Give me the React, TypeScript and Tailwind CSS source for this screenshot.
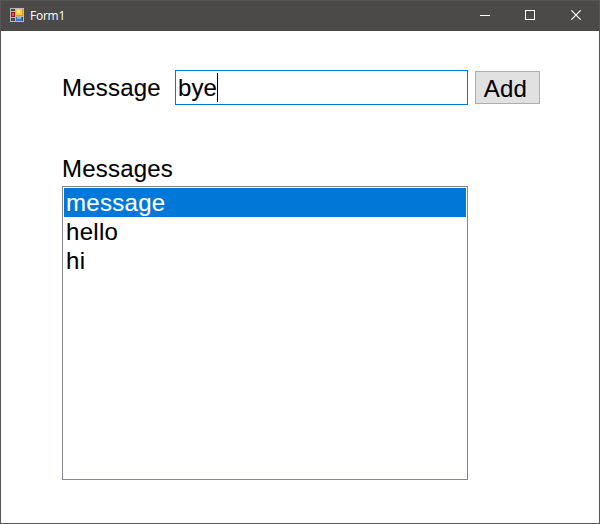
import { useState } from "react";

function AppIcon() {
  return (
    <svg className="mb-[2px]" width="14" height="14" viewBox="0 0 14 14" shapeRendering="crispEdges">
      <rect width="14" height="14" fill="#b9b9b9" />
      <rect x="1" y="1" width="4" height="2" fill="#4c4a48" />
      <rect x="1" y="10" width="4" height="3" fill="#4c4a48" />
      <rect x="12" y="9" width="1" height="4" fill="#4c4a48" />
      <rect x="1" y="4" width="4" height="5" fill="#a81712" />
      <rect x="2" y="5" width="2" height="3" fill="#e8503f" />
      <rect x="6" y="1" width="7" height="7" fill="#dc9a14" />
      <rect x="6" y="1" width="6" height="6" fill="#f8cb42" />
      <rect x="7" y="2" width="3" height="3" fill="#ffec98" />
      <rect x="6" y="9" width="6" height="4" fill="#3972d4" />
      <rect x="7" y="9" width="4" height="2" fill="#82b4f5" />
    </svg>
  );
}

function TitleBar() {
  return (
    <header className="flex h-[30px] items-center bg-[#4c4a48] pl-[9px] text-white">
      <AppIcon />
      <span className="ml-[6px] font-['Open_Sans',sans-serif] text-[12px] leading-[16px] tracking-[-0.25px]">Form1</span>
      <div className="ml-auto mr-px flex h-full" aria-label="Window controls">
        <span className="flex w-[45px] items-center justify-center">
          <svg width="10" height="10" shapeRendering="crispEdges">
            <path d="M0 4.5h10" stroke="white" />
          </svg>
        </span>
        <span className="flex w-[46px] items-center justify-center pb-[2px]">
          <svg width="10" height="10" shapeRendering="crispEdges">
            <path d="M.5 .5h9v9h-9z" stroke="white" fill="none" />
          </svg>
        </span>
        <span className="flex w-[45px] items-center justify-center pb-[2px]">
          <svg width="10" height="10">
            <path d="M.3 .3l9.4 9.4M9.7 .3l-9.4 9.4" stroke="white" strokeWidth="1.2" />
          </svg>
        </span>
      </div>
    </header>
  );
}

export default function App() {
  const [items] = useState(["message", "hello", "hi"]);
  return (
    <div className="flex h-[524px] w-[600px] flex-col border border-[#565656] bg-white font-['Liberation_Sans',Arial,sans-serif] text-[24px] leading-[29px] text-black">
      <TitleBar />
      <main className="pl-[61px] pt-[39px] [-webkit-text-stroke:0.1px]">
        <div className="flex items-start">
          <span className="w-[113px] shrink-0 pt-[3px] tracking-[0.2px]">Message</span>
          <div className="flex h-[35px] w-[293px] shrink-0 items-start border border-[#0078d7] pl-[2px] pt-[2px]">
            <span className="tracking-[0.1px]">bye</span>
            <span className="h-[29px] w-px bg-black" />
          </div>
          <button className="ml-[7px] mt-px h-[33px] w-[65px] shrink-0 border border-[#adadad] bg-[#e1e1e1] pr-[4px] pt-[2px] leading-[29px] tracking-[0.2px]">
            Add
          </button>
        </div>
        <div className="mt-[49px] tracking-[0.2px]">Messages</div>
        <ul className="mt-[3px] h-[294px] w-[406px] border border-[#828790] p-px tracking-[0.3px]">
          {items.map((item, i) => (
            <li key={item} className={i === 0 ? "h-[29px] bg-[#0078d7] pl-[2px] text-white" : "h-[29px] pl-[2px]"}>
              {item}
            </li>
          ))}
        </ul>
      </main>
    </div>
  );
}
